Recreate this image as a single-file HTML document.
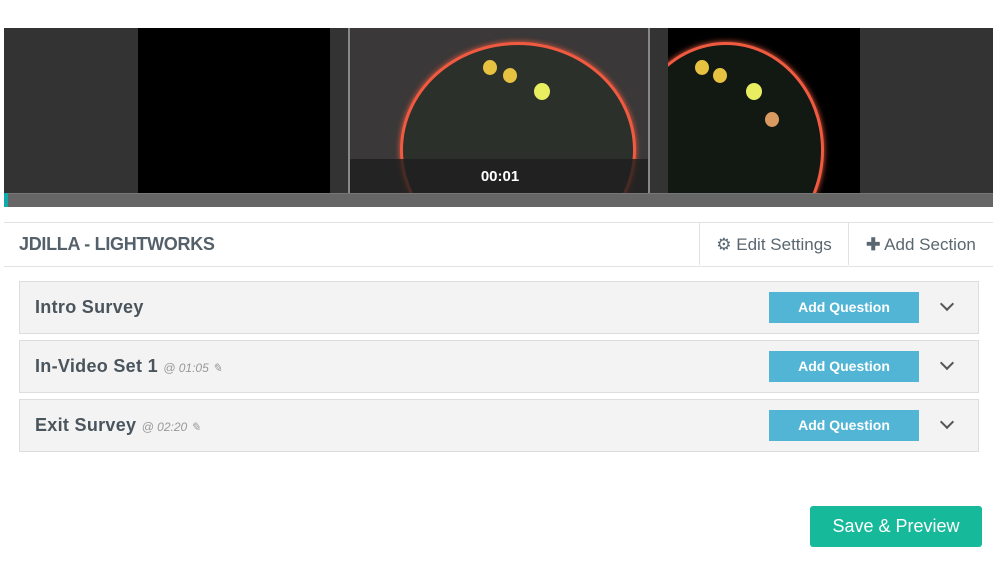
<!DOCTYPE html>
<html><head><style>
body{margin:0;width:995px;height:587px;background:#fff;font-family:"Liberation Sans",sans-serif;position:relative;overflow:hidden}
.a{position:absolute}
.sec{position:absolute;left:19px;width:958px;height:51px;background:#f3f3f3;border:1px solid #ddd}
.sec .t{position:absolute;left:15px;top:15px;font-size:18px;color:#4a545c;font-weight:bold;letter-spacing:.3px}
.sec .t i{font-size:12px;color:#999;font-weight:normal;letter-spacing:0}
.btn{position:absolute;left:749px;top:10px;width:150px;height:31px;background:#52b5d5;color:#fff;font-size:14px;font-weight:bold;text-align:center;line-height:31px}
.chev{position:absolute;left:922px;top:17px;width:8px;height:8px;border-right:2px solid #555;border-bottom:2px solid #555;transform:rotate(45deg)}
</style></head><body>
<div class="a" style="left:4px;top:28px;width:989px;height:165px;background:#333"></div>
<div class="a" style="left:138px;top:28px;width:192px;height:165px;background:#000"></div>
<div class="a" style="left:348px;top:28px;width:302px;height:165px;background:#3a3838;border-left:2px solid #888;border-right:2px solid #888;box-sizing:border-box;overflow:hidden">
 <div class="a" style="left:50px;top:14px;width:230px;height:210px;border:3px solid #f05a40;border-radius:50%;box-shadow:0 0 6px #f05a40;background:#2c302b"></div>
 <div class="a" style="left:133px;top:32px;width:14px;height:15px;border-radius:50%;background:#e6c240"></div>
 <div class="a" style="left:153px;top:40px;width:14px;height:15px;border-radius:50%;background:#e6c240"></div>
 <div class="a" style="left:184px;top:55px;width:16px;height:17px;border-radius:50%;background:#e8ee60"></div>
 <div class="a" style="left:0;top:131px;width:300px;height:34px;background:rgba(30,30,30,.8);color:#fff;font-weight:bold;font-size:15px;text-align:center;line-height:36px">00:01</div>
</div>
<div class="a" style="left:668px;top:28px;width:192px;height:165px;background:#000;overflow:hidden">
 <div class="a" style="left:-40px;top:14px;width:190px;height:210px;border:3px solid #f05a40;border-radius:50%;box-shadow:0 0 6px #f05a40;background:#121812"></div>
 <div class="a" style="left:27px;top:32px;width:14px;height:15px;border-radius:50%;background:#e6c240"></div>
 <div class="a" style="left:45px;top:40px;width:14px;height:15px;border-radius:50%;background:#e6c240"></div>
 <div class="a" style="left:78px;top:55px;width:16px;height:17px;border-radius:50%;background:#e8ee60"></div>
 <div class="a" style="left:97px;top:84px;width:14px;height:15px;border-radius:50%;background:#d89a60"></div>
</div>
<div class="a" style="left:4px;top:193px;width:989px;height:14px;background:#666;border-top:1px solid #777;box-sizing:border-box"></div>
<div class="a" style="left:4px;top:193px;width:4px;height:14px;background:#1aa"></div>
<div class="a" style="left:4px;top:222px;width:989px;height:43px;border-top:1px solid #e2e2e2;border-bottom:1px solid #e2e2e2"></div>
<div class="a" style="left:19px;top:234px;font-size:18px;font-weight:bold;color:#55616a;letter-spacing:-.3px">JDILLA - LIGHTWORKS</div>
<div class="a" style="left:699px;top:223px;width:150px;height:42px;border-left:1px solid #e2e2e2;border-right:1px solid #e2e2e2;box-sizing:border-box;font-size:17px;color:#5a6770;line-height:44px;text-align:center">⚙ Edit Settings</div>
<div class="a" style="left:849px;top:223px;width:144px;height:42px;font-size:17px;color:#5a6770;line-height:44px;text-align:center"><b>✚</b> Add Section</div>
<div class="sec" style="top:281px"><div class="t">Intro Survey</div><div class="btn">Add Question</div><div class="chev"></div></div>
<div class="sec" style="top:340px"><div class="t">In-Video Set 1 <i>@ 01:05 ✎</i></div><div class="btn">Add Question</div><div class="chev"></div></div>
<div class="sec" style="top:399px"><div class="t">Exit Survey <i>@ 02:20 ✎</i></div><div class="btn">Add Question</div><div class="chev"></div></div>
<div class="a" style="left:810px;top:506px;width:172px;height:41px;background:#17b99b;border-radius:3px;color:#fff;font-size:18px;text-align:center;line-height:41px">Save &amp; Preview</div>
</body></html>
